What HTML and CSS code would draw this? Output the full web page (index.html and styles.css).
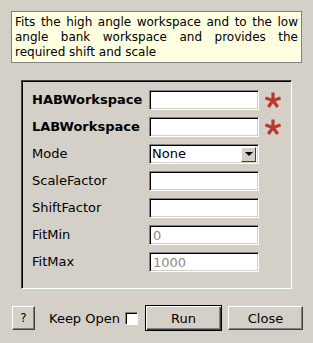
FILE: index.html
```html
<!DOCTYPE html>
<html lang="en">
<head>
    <meta charset="UTF-8">
    <title>Fit workspaces</title>
    <link rel="stylesheet" href="styles.css">
</head>
<body>
    <div class="dialog">
        <div class="desc">Fits the high angle workspace and to the low angle bank workspace and provides the required shift and scale</div>

        <div class="group">
            <div class="label bold">HABWorkspace</div>
            <input class="field" type="text">
            <svg class="star" viewBox="0 0 16 16"><g stroke="#b83a2c" stroke-width="3.2" stroke-linecap="butt"><line x1="8" y1="8.5" x2="8" y2="0.5"/><line x1="8" y1="8.5" x2="15.6" y2="6"/><line x1="8" y1="8.5" x2="12.7" y2="15"/><line x1="8" y1="8.5" x2="3.3" y2="15"/><line x1="8" y1="8.5" x2="0.4" y2="6"/></g></svg>

            <div class="label bold">LABWorkspace</div>
            <input class="field" type="text">
            <svg class="star" viewBox="0 0 16 16"><g stroke="#b83a2c" stroke-width="3.2" stroke-linecap="butt"><line x1="8" y1="8.5" x2="8" y2="0.5"/><line x1="8" y1="8.5" x2="15.6" y2="6"/><line x1="8" y1="8.5" x2="12.7" y2="15"/><line x1="8" y1="8.5" x2="3.3" y2="15"/><line x1="8" y1="8.5" x2="0.4" y2="6"/></g></svg>

            <div class="label">Mode</div>
            <div class="field combo">
                <span class="combo-text">None</span>
                <span class="combo-btn"><span class="arrow"></span></span>
            </div>
            <span></span>

            <div class="label">ScaleFactor</div>
            <input class="field" type="text">
            <span></span>

            <div class="label">ShiftFactor</div>
            <input class="field" type="text">
            <span></span>

            <div class="label">FitMin</div>
            <input class="field" type="text" placeholder="0">
            <span></span>

            <div class="label">FitMax</div>
            <input class="field" type="text" placeholder="1000">
            <span></span>
        </div>

        <div class="footer">
            <button class="btn btn-help">?</button>
            <label class="keep-open">Keep Open <span class="check"></span></label>
            <button class="btn btn-run">Run</button>
            <button class="btn btn-close">Close</button>
        </div>
    </div>
</body>
</html>
```

FILE: styles.css
```css
* {
    margin: 0;
    padding: 0;
    box-sizing: border-box;
}

body {
    background: #d4d0c8;
    font-family: 'DejaVu Sans', sans-serif;
    font-size: 12px;
    color: #000;
    width: 313px;
    height: 343px;
    overflow: hidden;
}

.dialog {
    display: flex;
    flex-direction: column;
    padding-top: 11px;
}

.desc {
    margin: 0 11px 0 11px;
    height: 52px;
    background: #ffffe1;
    border: 1px solid #808080;
    padding: 3px 3px 0 3px;
    line-height: 15px;
    text-align: justify;
}

.group {
    margin: 17px 0 0 21px;
    width: 271px;
    height: 209px;
    border: 1px solid;
    border-color: #404040 #fff #fff #404040;
    box-shadow: inset 1px 1px 0 #000;
    padding: 9px 0 0 10px;
    display: grid;
    grid-template-columns: 117px 110px 22px;
    grid-auto-rows: 20px;
    row-gap: 7px;
    align-items: center;
}

.label {
    font-size: 13px;
    line-height: 20px;
}

.bold {
    font-weight: bold;
}

.field {
    height: 20px;
    width: 110px;
    background: #fff;
    border: 1px solid;
    border-color: #808080 #fff #fff #808080;
    box-shadow: inset 1px 1px 0 #000, inset -1px -1px 0 #d4d0c8;
    font-family: 'DejaVu Sans', sans-serif;
    font-size: 13px;
    padding: 0 3px;
    outline: none;
}

.field::placeholder {
    color: #8a8a8a;
}

.star {
    width: 16px;
    height: 16px;
    margin-left: 6px;
}

.combo {
    display: flex;
    align-items: center;
    padding: 0 2px 0 2px;
}

.combo-text {
    flex: 1;
    line-height: 16px;
}

.combo-btn {
    width: 15px;
    height: 15px;
    background: #d4d0c8;
    border: 1px solid;
    border-color: #fff #404040 #404040 #fff;
    display: flex;
    justify-content: center;
    align-items: center;
}

.arrow {
    width: 0;
    height: 0;
    border-left: 4px solid transparent;
    border-right: 4px solid transparent;
    border-top: 4px solid #000;
}

.footer {
    display: flex;
    align-items: center;
    margin: 16px 0 0 12px;
    height: 26px;
}

.btn {
    font-family: 'DejaVu Sans', sans-serif;
    font-size: 13px;
    background: #d4d0c8;
    border: 1px solid;
    border-color: #fff #404040 #404040 #fff;
    box-shadow: inset -1px -1px 0 #808080;
    height: 24px;
    color: #000;
}

.btn-help {
    width: 23px;
    font-size: 12px;
}

.keep-open {
    display: flex;
    align-items: center;
    margin-left: 14px;
    font-size: 13px;
}

.check {
    width: 13px;
    height: 13px;
    margin-left: 5px;
    background: #fff;
    border: 1px solid;
    border-color: #808080 #fff #fff #808080;
    box-shadow: inset 1px 1px 0 #000;
}

.btn-run {
    width: 77px;
    height: 26px;
    margin-left: 7px;
    border: 1px solid #000;
    box-shadow: inset 1px 1px 0 #fff, inset -1px -1px 0 #404040, inset -2px -2px 0 #808080;
}

.btn-close {
    width: 75px;
    margin-left: 6px;
}
```
